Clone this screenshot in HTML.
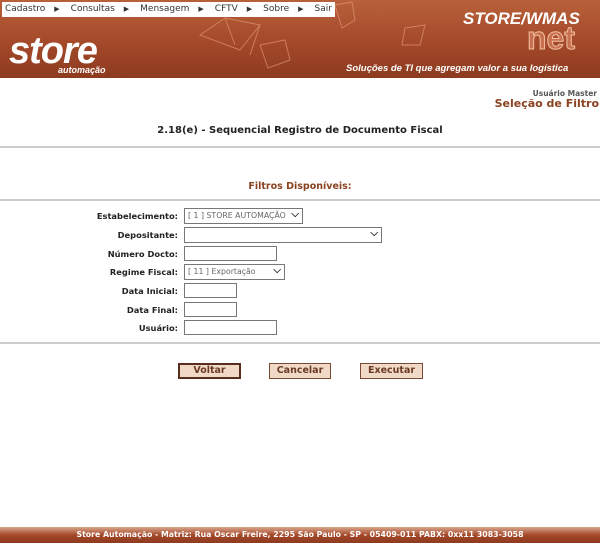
<!DOCTYPE html>
<html><head><meta charset="utf-8"><style>
*{margin:0;padding:0;box-sizing:border-box}
body{width:600px;height:543px;background:#fff;font-family:"DejaVu Sans","Liberation Sans",sans-serif;position:relative;overflow:hidden;font-size:9px}
.hdr{position:absolute;left:0;top:0;width:600px;height:78px;background:linear-gradient(180deg,#b8603a 0%,#a4492a 55%,#8d3a1f 100%)}
.menu{position:absolute;left:2px;top:2px;width:333px;height:15px;background:#fff;font-family:"DejaVu Sans",sans-serif;font-size:9px;color:#333;line-height:15px;padding-left:3px;white-space:nowrap}
.menu span{margin-right:9px}
.menu i{font-style:normal;font-size:7px;margin-right:11px}
.abs{position:absolute}
.lbl{position:absolute;right:422px;font-weight:bold;font-size:8.3px;color:#222}
.inp{position:absolute;left:184px;height:15px;border:1px solid #777;background:#fff}
.sel{position:absolute;left:184px;height:16px;border:1px solid #777;background:#fff;font-size:7.8px;color:#666;line-height:14px;padding-left:3px;white-space:nowrap;overflow:hidden}
.sel b{position:absolute;right:3px;top:-1px;font-weight:bold;color:#222;font-size:10px;background:#fff}
.hr{position:absolute;left:0;width:600px;height:2px;background:#ccc}
.btn{position:absolute;top:363px;height:16px;background:#f1d9c8;border:2px solid #7a4a35;font-weight:bold;font-size:9.5px;color:#6b3a25;text-align:center;line-height:12px}
</style></head><body>
<div class="hdr">
<svg class="abs" style="left:0;top:0" width="600" height="78">
<g stroke="#e8a080" stroke-width="1" fill="none" opacity=".6">
<path d="M200 35 L225 18 L260 25 L240 50 Z M225 18 L235 45 M260 25 L250 55"/>
<path d="M260 45 L285 40 L290 60 L268 68 Z"/>
<path d="M335 5 L352 2 L355 20 L342 28 Z"/>
<path d="M405 28 L425 25 L420 45 L402 45 Z"/>
</g></svg>
<div class="menu"><span>Cadastro</span><i>▶</i><span>Consultas</span><i>▶</i><span>Mensagem</span><i>▶</i><span>CFTV</span><i>▶</i><span>Sobre</span><i>▶</i><span>Sair</span></div>
<div class="abs" style="left:9px;top:30px;font:italic bold 38px 'Liberation Sans',sans-serif;color:#fff;letter-spacing:-1px">store</div>
<div class="abs" style="left:58px;top:65px;font:italic bold 9px 'Liberation Sans',sans-serif;color:#fff">automação</div>
<div class="abs" style="left:463px;top:9px;font:italic bold 17px 'Liberation Sans',sans-serif;color:#fff">STORE/WMAS</div>
<div class="abs" style="left:527px;top:20px;font:bold 32px 'Liberation Sans',sans-serif;color:#c87050;-webkit-text-stroke:1px #f0c0a0">net</div>
<div class="abs" style="left:346px;top:63px;font:italic bold 9.5px 'Liberation Sans',sans-serif;color:#fff">Soluções de TI que agregam valor a sua logística</div>
</div>
<div class="abs" style="right:3px;top:89px;font-size:7.5px;font-weight:bold;color:#555">Usuário Master</div>
<div class="abs" style="right:1px;top:97px;font-size:11px;font-weight:bold;color:#8a4220">Seleção de Filtro</div>
<div class="abs" style="left:0;width:600px;text-align:center;top:125px;font-size:10px;font-weight:bold;color:#222">2.18(e) - Sequencial Registro de Documento Fiscal</div>
<div class="hr" style="top:146px"></div>
<div class="abs" style="left:0;width:600px;text-align:center;top:181px;font-size:9.5px;font-weight:bold;color:#8a4220">Filtros Disponíveis:</div>
<div class="hr" style="top:199px"></div>
<div class="lbl" style="top:211px">Estabelecimento:</div>
<div class="sel" style="top:208px;width:119px">[ 1 ] STORE AUTOMAÇÃO<b>⌵</b></div>
<div class="lbl" style="top:230px">Depositante:</div>
<div class="sel" style="top:227px;width:198px"><b>⌵</b></div>
<div class="lbl" style="top:249px">Número Docto:</div>
<div class="inp" style="top:246px;width:93px"></div>
<div class="lbl" style="top:267px">Regime Fiscal:</div>
<div class="sel" style="top:264px;width:101px">[ 11 ] Exportação<b>⌵</b></div>
<div class="lbl" style="top:286px">Data Inicial:</div>
<div class="inp" style="top:283px;width:53px"></div>
<div class="lbl" style="top:305px">Data Final:</div>
<div class="inp" style="top:302px;width:53px"></div>
<div class="lbl" style="top:323px">Usuário:</div>
<div class="inp" style="top:320px;width:93px"></div>
<div class="hr" style="top:342px"></div>
<div class="btn" style="left:178px;width:63px;border-color:#5a2e1e">Voltar</div>
<div class="btn" style="left:269px;width:62px;border-width:1px;line-height:14px">Cancelar</div>
<div class="btn" style="left:360px;width:63px;border-width:1px;line-height:14px">Executar</div>
<div class="abs" style="left:0;top:527px;width:600px;height:16px;background:linear-gradient(180deg,#d9a68c,#a4492a 50%,#8d3a1f);color:#fff;font-size:7.8px;font-weight:bold;text-align:center;line-height:16px">Store Automação - Matriz: Rua Oscar Freire, 2295 São Paulo - SP - 05409-011 PABX: 0xx11 3083-3058</div>
</body></html>
